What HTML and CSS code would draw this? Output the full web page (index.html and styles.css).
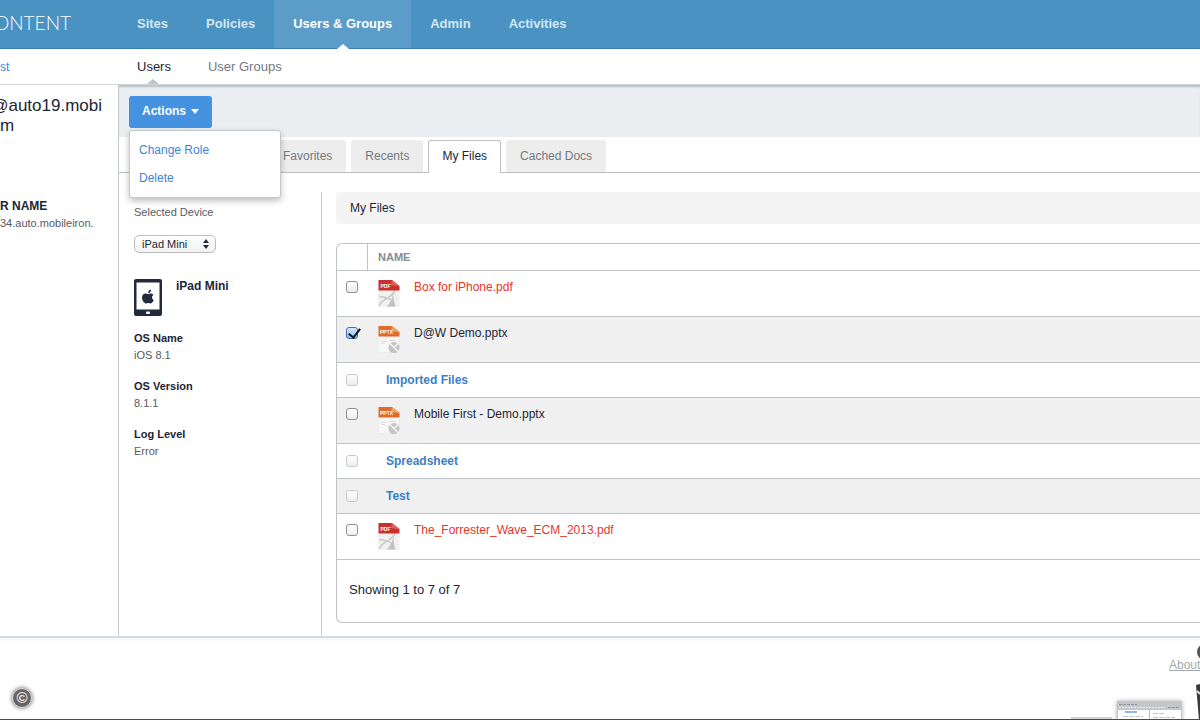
FILE: index.html
```html
<!DOCTYPE html>
<html lang="en">
<head>
    <meta charset="UTF-8">
    <meta name="viewport" content="width=device-width, initial-scale=1.0">
    <title>Content - Users</title>
    <link rel="stylesheet" href="styles.css">
</head>
<body>
    <!-- shared file icons -->
    <svg class="sprite" aria-hidden="true">
        <symbol id="icon-pdf" viewBox="0 0 22 27">
            <path fill="#f1f1f1" d="M0 9h21.500v18H0z"/>
            <path fill="none" stroke="#c9c9c9" stroke-width="1.500" d="M1 16.500c5 .5 10 1.500 13 4M1 26c3-6 7-7 10-9 3-2 5-4 6-7"/>
            <path fill="#c2c2c2" d="M15.500 12c0 5 0 9 2 14.500h-9c4-3.500 6-8 7-14.500z"/>
            <path fill="#c9302c" d="M.5 0H14l7.500 6v4.500H.5z"/>
            <path fill="#e0625c" d="M14 0l7.500 6.500L13 5z"/>
            <text class="file-tag" x="2.500" y="7.500">PDF</text>
        </symbol>
        <symbol id="icon-pptx" viewBox="0 0 22 27">
            <path fill="#f7f7f7" stroke="#e6e6e6" stroke-width=".5" d="M.5 9h21v17.500H.5z"/>
            <path stroke="#dedede" d="M3 15.500h6M3 17.500h4M11 14.500h7"/>
            <circle cx="16" cy="21.500" r="5.500" fill="#c4c4c4"/>
            <path fill="none" stroke="#f5f5f5" stroke-width="1.500" d="M12 17.500l8 8M16 21.500l4-4"/>
            <path fill="#df6a2c" d="M.5 0H14l7.500 6v4.500H.5z"/>
            <path fill="#f0a060" d="M14 0l7.500 6.500L13 5z"/>
            <text class="file-tag" x="2" y="7.500">PPTX</text>
        </symbol>
    </svg>

    <header class="topbar">
        <div class="brand">ONTENT</div>
        <nav class="main-nav">
            <a href="#">Sites</a>
            <a href="#">Policies</a>
            <a href="#" class="active">Users &amp; Groups</a>
            <a href="#">Admin</a>
            <a href="#">Activities</a>
        </nav>
    </header>

    <div class="subbar">
        <div class="back"><a href="#">st</a></div>
        <nav class="sub-nav">
            <a href="#" class="active">Users</a>
            <a href="#">User Groups</a>
        </nav>
    </div>

    <div class="page">
        <aside class="account">
            <h1>@auto19.mobi</h1>
            <p class="account-rest">m</p>
            <h2>R NAME</h2>
            <p class="server">34.auto.mobileiron.</p>
        </aside>

        <main class="content">
            <div class="toolbar">
                <div class="dropdown">
                    <button type="button" class="btn-actions">Actions <span class="caret"></span></button>
                    <div class="menu">
                        <a href="#">Change Role</a>
                        <a href="#">Delete</a>
                    </div>
                </div>
            </div>

            <nav class="tabs">
                <a href="#">Favorites</a>
                <a href="#">Recents</a>
                <a href="#" class="active">My Files</a>
                <a href="#">Cached Docs</a>
            </nav>

            <div class="columns">
                <section class="device">
                    <label for="device">Selected Device</label>
                    <div class="select">
                        <select id="device">
                            <option>iPad Mini</option>
                        </select>
                        <svg width="6" height="10" viewBox="0 0 6 10"><path fill="#222b38" d="M3 0l3 4H0zM0 6h6l-3 4z"/></svg>
                    </div>
                    <div class="device-name">
                        <svg width="28" height="37" viewBox="0 0 28 37">
                            <rect width="28" height="37" rx="2" fill="#222b3b"/>
                            <path fill="#fff" d="M2.500 3.500h23v27h-23z"/>
                            <rect x="12" y="32.500" width="4" height="2.500" rx="1" fill="#fff"/>
                            <path fill="#222b3b" d="M14.200 14.200c-.2-2 1-3.500 2.800-3.800.2 2-1.200 3.600-2.800 3.800zM19.400 16c-2 1.300-1.800 4 .4 5-.6 1.700-1.800 3.400-3 3.400-.9 0-1.300-.5-2.400-.5s-1.600.5-2.400.5C10 24.400 8 21.200 8 18.600c0-2.700 1.700-4.100 3.500-4.100 1.200 0 2 .7 2.800.7s1.600-.7 2.900-.7c.8 0 1.700.5 2.200 1.500z"/>
                        </svg>
                        <strong>iPad Mini</strong>
                    </div>
                    <dl>
                        <dt>OS Name</dt>
                        <dd>iOS 8.1</dd>
                        <dt>OS Version</dt>
                        <dd>8.1.1</dd>
                        <dt>Log Level</dt>
                        <dd>Error</dd>
                    </dl>
                </section>

                <section class="files">
                    <h3>My Files</h3>
                    <div class="panel">
                        <table>
                            <thead>
                                <tr><th class="check"></th><th>NAME</th></tr>
                            </thead>
                            <tbody>
                                <tr class="file">
                                    <td class="check"><input type="checkbox" id="f1"></td>
                                    <td><label for="f1" class="blocked"><svg><use href="#icon-pdf"/></svg>Box for iPhone.pdf</label></td>
                                </tr>
                                <tr class="file">
                                    <td class="check"><input type="checkbox" id="f2" checked></td>
                                    <td><label for="f2"><svg><use href="#icon-pptx"/></svg>D@W Demo.pptx</label></td>
                                </tr>
                                <tr class="folder">
                                    <td class="check"><input type="checkbox" aria-label="Imported Files" disabled></td>
                                    <td><a href="#">Imported Files</a></td>
                                </tr>
                                <tr class="file">
                                    <td class="check"><input type="checkbox" id="f4"></td>
                                    <td><label for="f4"><svg><use href="#icon-pptx"/></svg>Mobile First - Demo.pptx</label></td>
                                </tr>
                                <tr class="folder">
                                    <td class="check"><input type="checkbox" aria-label="Spreadsheet" disabled></td>
                                    <td><a href="#">Spreadsheet</a></td>
                                </tr>
                                <tr class="folder">
                                    <td class="check"><input type="checkbox" aria-label="Test" disabled></td>
                                    <td><a href="#">Test</a></td>
                                </tr>
                                <tr class="file">
                                    <td class="check"><input type="checkbox" id="f7"></td>
                                    <td><label for="f7" class="blocked"><svg><use href="#icon-pdf"/></svg>The_Forrester_Wave_ECM_2013.pdf</label></td>
                                </tr>
                            </tbody>
                        </table>
                        <p class="summary">Showing 1 to 7 of 7</p>
                    </div>
                </section>
            </div>
        </main>
    </div>

    <footer class="footer">
        <span class="copyright">©</span>
        <a href="#" class="about">About</a>
        <svg class="desktop" width="132" height="76" viewBox="0 0 132 76">
            <circle cx="137" cy="8" r="8" fill="#555"/>
            <path fill="#d4d4d4" d="M3 73h41v3H3z"/>
            <g class="thumb">
                <path fill="#fff" stroke="#c4c6ca" d="M49.500 57.500h64v20h-64z"/>
                <path fill="#c3c6cb" d="M49 57h65v9H49z"/>
                <path stroke="#8e949c" stroke-dasharray="3 1" d="M51 60.500h18M100 63.500h12"/>
                <path stroke="#eceef0" stroke-dasharray="2 1" d="M51 63.500h46"/>
                <path stroke="#b9bcc2" d="M81.500 66v10"/>
                <path stroke="#8fbbe0" stroke-width="2" d="M57 68h12"/>
                <path stroke="#c4c6ca" stroke-dasharray="5 1" d="M55 72.500h20M85 69.500h12M85 73.500h22"/>
            </g>
            <path fill="#3a3a3d" d="M128 41l4-1v36h-1z"/>
            <path stroke="#ddd" stroke-width="2" d="M129 47l3 3"/>
        </svg>
    </footer>
</body>
</html>
```

FILE: styles.css
```css
* {
    box-sizing: border-box;
}

body {
    font-family: "Liberation Sans", Arial, sans-serif;
    font-size: 12px;
    color: #1b2636;
    background-color: #fff;
    margin: 0;
    min-height: 100vh;
    display: flex;
    flex-direction: column;
    overflow-x: hidden;
}

h1, h2, h3, p, dl, dd {
    margin: 0;
}

a {
    color: #3f82dc;
    text-decoration: none;
}

.sprite {
    display: none;
}

/* header */
.topbar {
    display: flex;
    height: 49px;
    background-color: #4a92c2;
    border-bottom: 1px solid #3581b5;
}

.brand {
    display: flex;
    justify-content: flex-end;
    width: 118px;
    padding-right: 47px;
    font-family: Lato, sans-serif;
    font-size: 19px;
    font-weight: 300;
    line-height: 46px;
    color: #fff;
    overflow: hidden;
}

.main-nav, .sub-nav {
    display: flex;
}

.main-nav a {
    position: relative;
    padding: 0 19px;
    font-size: 13px;
    font-weight: bold;
    line-height: 48px;
    color: #d6e8f4;
}

.main-nav a.active {
    background-color: #5b9cc8;
    color: #fff;
}

.main-nav a.active::after, .sub-nav a.active::after {
    content: "";
    position: absolute;
    left: 50%;
    bottom: -1px;
    margin-left: -6px;
    border: 6px solid transparent;
    border-top: 0;
    border-bottom: 5px solid #fff;
}

.subbar {
    display: flex;
    height: 36px;
    border-bottom: 1px solid #d3d7da;
}

.back {
    width: 118px;
    line-height: 36px;
}

.sub-nav a {
    position: relative;
    padding: 0 18px 0 19px;
    font-size: 13px;
    line-height: 36px;
    color: #747980;
}

.sub-nav a.active {
    color: #1b2636;
}

.sub-nav a.active::after {
    bottom: 0;
    border-bottom-color: #bfc3c7;
}

/* page */
.page {
    display: flex;
    border-bottom: 2px solid #d5dade;
    box-shadow: 0 2px 2px #f4f5f6;
}

.account {
    width: 119px;
    flex-shrink: 0;
    padding-top: 11px;
    border-right: 1px solid #c4c9ce;
    overflow: hidden;
}

.account h1, .account-rest {
    font-size: 17px;
    font-weight: normal;
    line-height: 20px;
}

.account h1 {
    display: flex;
    justify-content: flex-end;
    padding-right: 16px;
}

.account h2 {
    margin-top: 61px;
    font-size: 12px;
    line-height: 18px;
}

.server {
    font-size: 11px;
    line-height: 16px;
    color: #555b63;
}

.content {
    flex: 1;
    min-width: 0;
}

.toolbar {
    height: 52px;
    padding: 11px 10px;
    background-color: #eaeef1;
    box-shadow: inset 0 3px 2px -1px #b9bec2;
}

.dropdown {
    position: relative;
    display: inline-block;
}

.btn-actions {
    display: flex;
    align-items: center;
    gap: 5px;
    height: 32px;
    padding: 0 13px 2px;
    font-family: inherit;
    font-size: 12px;
    font-weight: bold;
    color: #fff;
    background-color: #4593e0;
    border: none;
    border-radius: 3px;
    cursor: pointer;
}

.caret {
    border: 4px solid transparent;
    border-top: 5px solid #fff;
    border-bottom: 0;
}

.menu {
    position: absolute;
    top: 100%;
    left: 0;
    z-index: 1;
    width: 152px;
    margin-top: 2px;
    padding: 5px 0;
    background-color: #fff;
    border: 1px solid #c4c8cc;
    border-radius: 3px;
    box-shadow: 0 3px 6px rgba(0, 0, 0, 0.25);
}

.menu a {
    display: block;
    padding: 0 9px;
    line-height: 28px;
}

.tabs {
    display: flex;
    gap: 5px;
    margin-top: 3px;
    padding-left: 150px;
    border-bottom: 1px solid #bcbfc2;
}

.tabs a {
    padding: 0 13px;
    border: 1px solid #ededed;
    border-bottom: 0;
    border-radius: 3px 3px 0 0;
    font-size: 12px;
    line-height: 31px;
    color: #747980;
    background-color: #ededed;
}

.tabs a.active {
    margin-bottom: -1px;
    color: #1b2636;
    background-color: #fff;
    border-color: #bcbfc2;
}

.columns {
    display: flex;
    padding-top: 19px;
}

.device {
    width: 203px;
    flex-shrink: 0;
    padding: 12px 15px;
    font-size: 11px;
    border-right: 1px solid #c8ccd0;
}

.device label {
    display: block;
    line-height: 16px;
    color: #555b63;
}

.select {
    display: flex;
    align-items: center;
    width: 82px;
    height: 18px;
    margin-top: 15px;
    padding-right: 6px;
    border: 1px solid #bcbcbc;
    border-radius: 5px;
    background: linear-gradient(#fff, #f1f1f1);
}

.select select {
    width: 68px;
    padding: 0 0 1px 7px;
    appearance: none;
    font-family: inherit;
    font-size: 11px;
    color: #1b2636;
    background: none;
    border: none;
}

.device-name {
    display: flex;
    gap: 14px;
    margin-top: 26px;
    font-size: 12px;
}

.device dt {
    margin-top: 14px;
    font-weight: bold;
    line-height: 17px;
}

.device dd {
    line-height: 17px;
    color: #555b63;
}

.files {
    flex: 1;
    padding: 0 0 13px 14px;
}

.files h3 {
    padding-left: 14px;
    font-size: 12px;
    font-weight: normal;
    line-height: 32px;
    background-color: #f4f4f4;
    border-radius: 3px 0 0 3px;
}

.panel {
    margin-top: 19px;
    border: 1px solid #bfc2c6;
    border-right: 0;
    border-radius: 6px 0 0 6px;
}

table {
    width: 100%;
    border-spacing: 0;
}

th, td {
    padding: 0 10px;
    text-align: left;
    border-bottom: 1px solid #bfc2c6;
}

th {
    font-size: 11px;
    line-height: 26px;
    color: #868b91;
}

.check {
    width: 31px;
    padding: 0 0 0 9px;
}

th.check {
    border-right: 1px solid #bfc2c6;
}

tbody tr:nth-child(even) {
    background-color: #f0f0f0;
}

.file td {
    padding-top: 9px;
    padding-bottom: 9px;
    vertical-align: top;
}

.file label {
    display: flex;
    gap: 14px;
}

.file label svg {
    width: 22px;
    height: 27px;
}

.file .blocked {
    color: #e8352a;
}

.file-tag {
    font-size: 5px;
    font-weight: bold;
    fill: #fff;
}

.folder td {
    height: 35px;
    padding-left: 18px;
}

.folder td.check {
    padding-left: 9px;
}

.folder a {
    font-weight: bold;
    color: #3b7fc4;
}

input[type="checkbox"] {
    display: block;
    appearance: none;
    width: 12px;
    height: 12px;
    margin: 0;
    background: linear-gradient(#fff, #ededed);
    border: 1px solid #8f8f8f;
    border-radius: 3px;
}

.file input[type="checkbox"] {
    margin-top: 1px;
}

input[type="checkbox"]:disabled {
    border-color: #c9c9c9;
}

input[type="checkbox"]:checked {
    position: relative;
    background: linear-gradient(#d6e8fb, #8dbdf0);
    border-color: #4a6fa8;
}

input[type="checkbox"]:checked::after {
    content: "";
    position: absolute;
    left: 4px;
    top: -2px;
    width: 5px;
    height: 10px;
    border: solid #0b1728;
    border-width: 0 2px 2px 0;
    transform: rotate(38deg);
}

.summary {
    padding: 21px 12px 23px;
    font-size: 13px;
    line-height: 18px;
}

/* footer */
.footer {
    position: relative;
    flex: 1;
    display: flex;
    justify-content: space-between;
    padding: 0 0 11px 12px;
    border-bottom: 1px solid #4b4b4b;
    overflow: hidden;
}

.copyright {
    align-self: flex-end;
    width: 20px;
    height: 20px;
    font-size: 15px;
    font-weight: bold;
    line-height: 18px;
    text-align: center;
    color: #e8e8e8;
    background-color: #666;
    border: 1px solid #ddd;
    border-radius: 50%;
    box-shadow: 0 0 4px #555;
}

.about {
    width: 31px;
    padding-top: 18px;
    line-height: 18px;
    color: #a5a8ac;
    text-decoration: underline;
}

.desktop {
    position: absolute;
    right: 0;
    bottom: -1px;
    pointer-events: none;
}

.thumb {
    filter: drop-shadow(0 0 2px #aaa);
}
```
